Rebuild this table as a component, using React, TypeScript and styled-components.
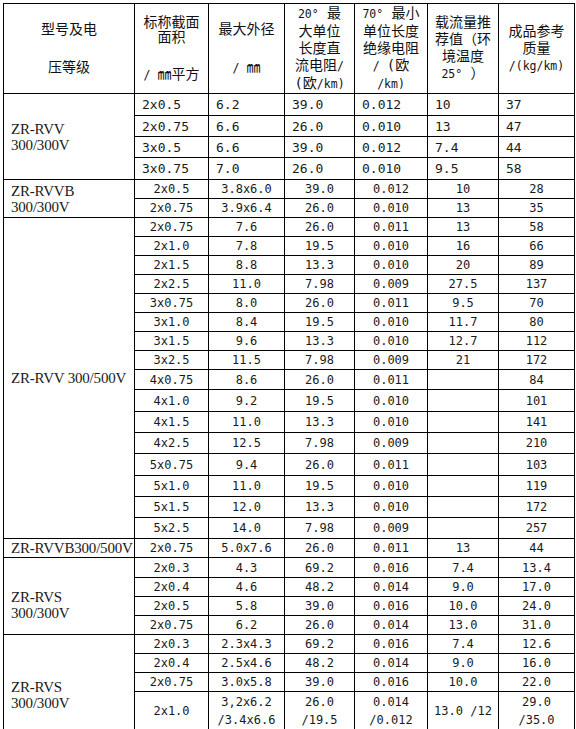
import React from 'react'
import styled, { createGlobalStyle, css } from 'styled-components'

const GlobalStyle = createGlobalStyle`
	html, body {
		margin: 0;
		padding: 0;
		background: #fff;
	}
	body {
		font-family: "DejaVu Sans Mono", "Noto Sans CJK SC", monospace;
		color: #111;
	}
`

interface IRow {
	cells: string[]
	h: number
}

interface IGroup {
	model: string[]
	align: 'left' | 'center'
	shift?: number
	rows: IRow[]
}

const r = (h: number, ...cells: string[]): IRow => ({ h, cells })

const GROUPS: IGroup[] = [
	{
		model: ['ZR-RVV', '300/300V'],
		align: 'left',
		rows: [
			r(22, '2x0.5', '6.2', '39.0', '0.012', '10', '37'),
			r(21, '2x0.75', '6.6', '26.0', '0.010', '13', '47'),
			r(21, '3x0.5', '6.6', '39.0', '0.012', '7.4', '44'),
			r(22, '3x0.75', '7.0', '26.0', '0.010', '9.5', '58'),
		],
	},
	{
		model: ['ZR-RVVB', '300/300V'],
		align: 'center',
		rows: [
			r(19, '2x0.5', '3.8x6.0', '39.0', '0.012', '10', '28'),
			r(19, '2x0.75', '3.9x6.4', '26.0', '0.010', '13', '35'),
		],
	},
	{
		model: ['ZR-RVV 300/500V'],
		align: 'center',
		rows: [
			r(19, '2x0.75', '7.6', '26.0', '0.011', '13', '58'),
			r(19, '2x1.0', '7.8', '19.5', '0.010', '16', '66'),
			r(19, '2x1.5', '8.8', '13.3', '0.010', '20', '89'),
			r(19, '2x2.5', '11.0', '7.98', '0.009', '27.5', '137'),
			r(19, '3x0.75', '8.0', '26.0', '0.011', '9.5', '70'),
			r(19, '3x1.0', '8.4', '19.5', '0.010', '11.7', '80'),
			r(19, '3x1.5', '9.6', '13.3', '0.010', '12.7', '112'),
			r(19, '3x2.5', '11.5', '7.98', '0.009', '21', '172'),
			r(20, '4x0.75', '8.6', '26.0', '0.011', '', '84'),
			r(22, '4x1.0', '9.2', '19.5', '0.010', '', '101'),
			r(21, '4x1.5', '11.0', '13.3', '0.010', '', '141'),
			r(21, '4x2.5', '12.5', '7.98', '0.009', '', '210'),
			r(22, '5x0.75', '9.4', '26.0', '0.011', '', '103'),
			r(21, '5x1.0', '11.0', '19.5', '0.010', '', '119'),
			r(21, '5x1.5', '12.0', '13.3', '0.010', '', '172'),
			r(21, '5x2.5', '14.0', '7.98', '0.009', '', '257'),
		],
	},
	{
		model: ['ZR-RVVB300/500V'],
		align: 'center',
		rows: [r(19, '2x0.75', '5.0x7.6', '26.0', '0.011', '13', '44')],
	},
	{
		model: ['ZR-RVS', '300/300V'],
		align: 'center',
		shift: 18,
		rows: [
			r(20, '2x0.3', '4.3', '69.2', '0.016', '7.4', '13.4'),
			r(19, '2x0.4', '4.6', '48.2', '0.014', '9.0', '17.0'),
			r(18, '2x0.5', '5.8', '39.0', '0.016', '10.0', '24.0'),
			r(18, '2x0.75', '6.2', '26.0', '0.014', '13.0', '31.0'),
		],
	},
	{
		model: ['ZR-RVS', '300/300V'],
		align: 'center',
		shift: 26,
		rows: [
			r(18, '2x0.3', '2.3x4.3', '69.2', '0.016', '7.4', '12.6'),
			r(19, '2x0.4', '2.5x4.6', '48.2', '0.014', '9.0', '16.0'),
			r(19, '2x0.75', '3.0x5.8', '39.0', '0.016', '10.0', '22.0'),
			r(38, '2x1.0', '3,2x6.2\n/3.4x6.6', '26.0\n/19.5', '0.014\n/0.012', '13.0 /12', '29.0\n/35.0'),
		],
	},
]

const COLS = [131, 74, 76, 70, 73, 71, 76]

const Page = styled.div`
	padding: 3px 0 0 3px;
`

const Table = styled.table`
	border-collapse: collapse;
	table-layout: fixed;
	width: 571px;
	border: 1px solid #000;
`

const Row = styled.tr<{ $h: number }>`
	height: ${({ $h }) => $h}px;
`

const HeadCell = styled.th`
	border: 1px solid #000;
	padding: 0 2px;
	vertical-align: middle;
	text-align: center;
	font-weight: normal;
	font-size: 14px;
	line-height: 17px;
	color: #111;
`

const HeadLine = styled.div<{ $lh?: number }>`
	white-space: nowrap;
	${({ $lh }) =>
		$lh &&
		css`
			line-height: ${$lh}px;
		`}
`

const Gap = styled.div<{ $h: number }>`
	height: ${({ $h }) => $h}px;
`

const Lat = styled.span`
	font-family: "DejaVu Sans Mono", monospace;
	font-size: 11.5px;
`

const ModelCell = styled.td<{ $shift: number }>`
	border: 1px solid #000;
	padding: ${({ $shift }) => $shift}px 4px 0 7px;
	vertical-align: middle;
	text-align: left;
	font-family: "Liberation Serif", "Times New Roman", serif;
	font-size: 15px;
	line-height: 16px;
	color: #1a1a1a;
	white-space: nowrap;
	letter-spacing: -0.2px;
`

const Cell = styled.td<{ $align: 'left' | 'center' }>`
	border: 1px solid #000;
	padding: 0 2px;
	vertical-align: middle;
	white-space: nowrap;
	color: #1a1a1a;
	${({ $align }) =>
		$align === 'left'
			? css`
					text-align: left;
					padding-left: 7px;
					font-size: 13px;
					line-height: 15px;
			  `
			: css`
					text-align: center;
					font-size: 12px;
					line-height: 18px;
			  `}
`

const Header = () => (
	<Row $h={90}>
		<HeadCell>
			<HeadLine $lh={15}>型号及电</HeadLine>
			<Gap $h={23} />
			<HeadLine $lh={15}>压等级</HeadLine>
		</HeadCell>
		<HeadCell>
			<HeadLine $lh={15}>标称截面</HeadLine>
			<HeadLine $lh={15}>面积</HeadLine>
			<Gap $h={22} />
			<HeadLine $lh={15}>
				<Lat>/ </Lat>㎜平方
			</HeadLine>
		</HeadCell>
		<HeadCell>
			<HeadLine $lh={15}>最大外径</HeadLine>
			<Gap $h={23} />
			<HeadLine $lh={15}>
				<Lat>/ </Lat>㎜
			</HeadLine>
		</HeadCell>
		<HeadCell>
			<HeadLine>
				<Lat>20°</Lat> 最
			</HeadLine>
			<HeadLine>大单位</HeadLine>
			<HeadLine>长度直</HeadLine>
			<HeadLine>
				流电阻<Lat>/</Lat>
			</HeadLine>
			<HeadLine>
				(欧<Lat>/km)</Lat>
			</HeadLine>
		</HeadCell>
		<HeadCell>
			<HeadLine>
				<Lat>70°</Lat> 最小
			</HeadLine>
			<HeadLine>单位长度</HeadLine>
			<HeadLine>绝缘电阻</HeadLine>
			<HeadLine>
				<Lat>/ </Lat>(欧
			</HeadLine>
			<HeadLine>
				<Lat>/km)</Lat>
			</HeadLine>
		</HeadCell>
		<HeadCell>
			<HeadLine>载流量推</HeadLine>
			<HeadLine>荐值（环</HeadLine>
			<HeadLine>境温度</HeadLine>
			<HeadLine>
				<Lat>25°</Lat> ）
			</HeadLine>
		</HeadCell>
		<HeadCell>
			<HeadLine>成品参考</HeadLine>
			<HeadLine>质量</HeadLine>
			<HeadLine>
				<Lat>/(kg/km)</Lat>
			</HeadLine>
		</HeadCell>
	</Row>
)

const CellText = ({ text }: { text: string }) => (
	<>
		{text.split('\n').map((line, i) => (
			<React.Fragment key={i}>
				{i > 0 && <br />}
				{line}
			</React.Fragment>
		))}
	</>
)

export default function App() {
	return (
		<Page>
			<GlobalStyle />
			<Table>
				<colgroup>
					{COLS.map((w, i) => (
						<col key={i} style={{ width: w }} />
					))}
				</colgroup>
				<tbody>
					<Header />
					{GROUPS.map((g, gi) =>
						g.rows.map((row, ri) => (
							<Row key={`${gi}-${ri}`} $h={row.h}>
								{ri === 0 && (
									<ModelCell rowSpan={g.rows.length} $shift={g.shift ?? 0}>
										{g.model.map((m) => (
											<div key={m}>{m}</div>
										))}
									</ModelCell>
								)}
								{row.cells.map((c, ci) => (
									<Cell key={ci} $align={g.align}>
										<CellText text={c} />
									</Cell>
								))}
							</Row>
						))
					)}
				</tbody>
			</Table>
		</Page>
	)
}
